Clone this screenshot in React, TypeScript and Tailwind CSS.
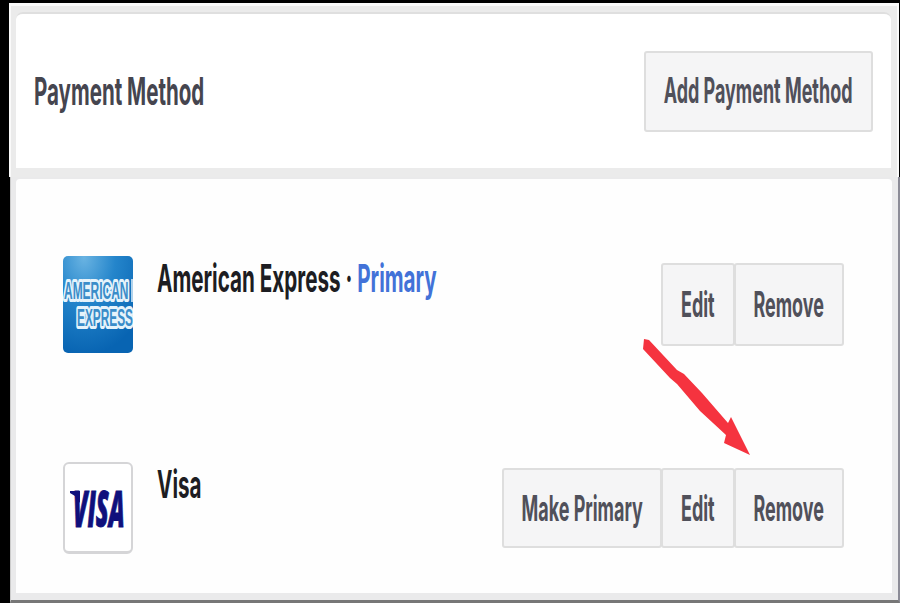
import type { ReactNode } from "react";
import clsx from "clsx";

interface Action {
  label: string;
  width: string;
}

const EDIT: Action = { label: "Edit", width: "w-[74px]" };
const REMOVE: Action = { label: "Remove", width: "w-[110px]" };
const MAKE_PRIMARY: Action = { label: "Make Primary", width: "w-[160px]" };
const ADD_METHOD: Action = { label: "Add Payment Method", width: "w-[229px]" };

const ActionButton = ({ action, className }: { action: Action; className?: string }) => (
  <button
    type="button"
    className={clsx(
      "flex shrink-0 items-center justify-center rounded-[3px] border-2 border-[#dedede] bg-[#f5f5f6] text-[35px] leading-none font-bold text-[#50505a]",
      action.width,
      className
    )}
  >
    <span className="shrink-0 scale-x-[0.513] whitespace-nowrap">{action.label}</span>
  </button>
);

const AmexLogo = () => (
  <svg width="70" height="97" viewBox="0 0 70 97" className="shrink-0">
    <defs>
      <radialGradient id="amex" cx="0.3" cy="0.02" r="1">
        <stop offset="0" stopColor="#69b3e2" />
        <stop offset="0.45" stopColor="#2485cb" />
        <stop offset="1" stopColor="#0864b2" />
      </radialGradient>
    </defs>
    <rect width="70" height="97" rx="5" fill="url(#amex)" />
    <g
      fontFamily="Liberation Sans, sans-serif"
      fontWeight="700"
      fontSize="23"
      fill="#3b8dc9"
      stroke="#e6f3fb"
      strokeWidth="6"
      strokeLinejoin="round"
      paintOrder="stroke"
    >
      <text transform="translate(1 43) scale(0.52 1)">AMERICAN</text>
      <text transform="translate(14 70) scale(0.515 1)">EXPRESS</text>
    </g>
    <path d="M69 23v23" stroke="#e6f3fb" strokeWidth="1.5" />
  </svg>
);

const VisaLogo = () => (
  <div className="flex h-[92px] w-[70px] shrink-0 items-center justify-center rounded-[6px] border-2 border-b-[3px] border-[#d5d5d7] bg-white">
    <svg width="66" height="84" viewBox="0 0 66 84">
      <text
        transform="translate(8 61) scale(0.48 1)"
        fontFamily="Open Sans, sans-serif"
        fontStyle="italic"
        fontWeight="800"
        fontSize="49"
        fill="#10107c"
        stroke="#10107c"
        strokeWidth="1"
      >
        VISA
      </text>
      <path d="M5 25h10v12L10 30L5 27z" fill="#10107c" />
    </svg>
  </div>
);

interface MethodRowProps {
  logo: ReactNode;
  name: ReactNode;
  actions: Action[];
  actionsClass: string;
  buttonClass: string;
  className: string;
}

const MethodRow = ({
  logo,
  name,
  actions,
  actionsClass,
  buttonClass,
  className,
}: MethodRowProps) => (
  <div className={clsx("flex items-start pr-[48px] pl-[47px]", className)}>
    {logo}
    <div className="ml-6 w-0 flex-1 text-[38px] leading-[44px] font-bold whitespace-nowrap text-[#1d1d22]">
      {name}
    </div>
    <div className={clsx("flex", actionsClass)}>
      {actions.map((action, i) => (
        <ActionButton
          key={action.label}
          action={action}
          className={clsx(buttonClass, i > 0 && "-ml-px")}
        />
      ))}
    </div>
  </div>
);

const Arrow = () => (
  <svg
    width="110"
    height="120"
    viewBox="0 0 110 120"
    className="pointer-events-none absolute top-[337px] left-[641px]"
  >
    <path
      d="M3 2L8 3L36 33L43 37L61 56L87 86L90 80L109 118L83 106L85 98L59 74L36 47L29 41L2 12Z"
      fill="#f5333f"
    />
  </svg>
);

const App = () => {
  return (
    <div className="relative flex h-[603px] w-[900px] flex-col overflow-hidden bg-black pt-[3px] pl-[9px] font-['Inter',sans-serif]">
      <div className="flex h-[174px] w-[890px] shrink-0 flex-col border-t-[3px] border-r-2 border-l-2 border-[#fafafa] bg-[#ebebeb] pt-[6px] pr-[6px] pl-[5px]">
        <header className="flex h-[156px] items-start justify-between rounded-t-[7px] border-t-2 border-[#dfdfdf] bg-white pt-[37px] pr-[18px] pl-[18px]">
          <h1 className="w-[170px] pt-[18px] text-[38px] leading-[44px] font-bold whitespace-nowrap text-[#45454f]">
            <span className="inline-block origin-left scale-x-[0.54]">Payment Method</span>
          </h1>
          <ActionButton action={ADD_METHOD} className="h-[81px] pb-[3px]" />
        </header>
      </div>
      <div className="ml-px flex h-[426px] w-[890px] flex-col border-r-2 border-b-[3px] border-l border-r-[#8c8c97] border-b-[#777777] border-l-[#cccccc] bg-[#eaeaeb] pr-[6px] pb-[7px] pl-[5px]">
        <main className="mt-[2px] flex-1 rounded-t-[4px] bg-[#fefefe]">
          <MethodRow
            className="h-[206px] pt-[77px]"
            logo={<AmexLogo />}
            actionsClass="mt-[7px]"
            buttonClass="h-[83px] pb-[1px]"
            actions={[EDIT, REMOVE]}
            name={
              <p className="inline-block origin-left scale-x-[0.543]">
                American Express · <span className="text-[#4272d8]">Primary</span>
              </p>
            }
          />
          <MethodRow
            className="pt-[77px]"
            logo={<VisaLogo />}
            actionsClass="mt-[6px]"
            buttonClass="h-[80px]"
            actions={[MAKE_PRIMARY, EDIT, REMOVE]}
            name={<p className="inline-block origin-left scale-x-[0.543]">Visa</p>}
          />
        </main>
      </div>
      <Arrow />
    </div>
  );
};

export default App;
